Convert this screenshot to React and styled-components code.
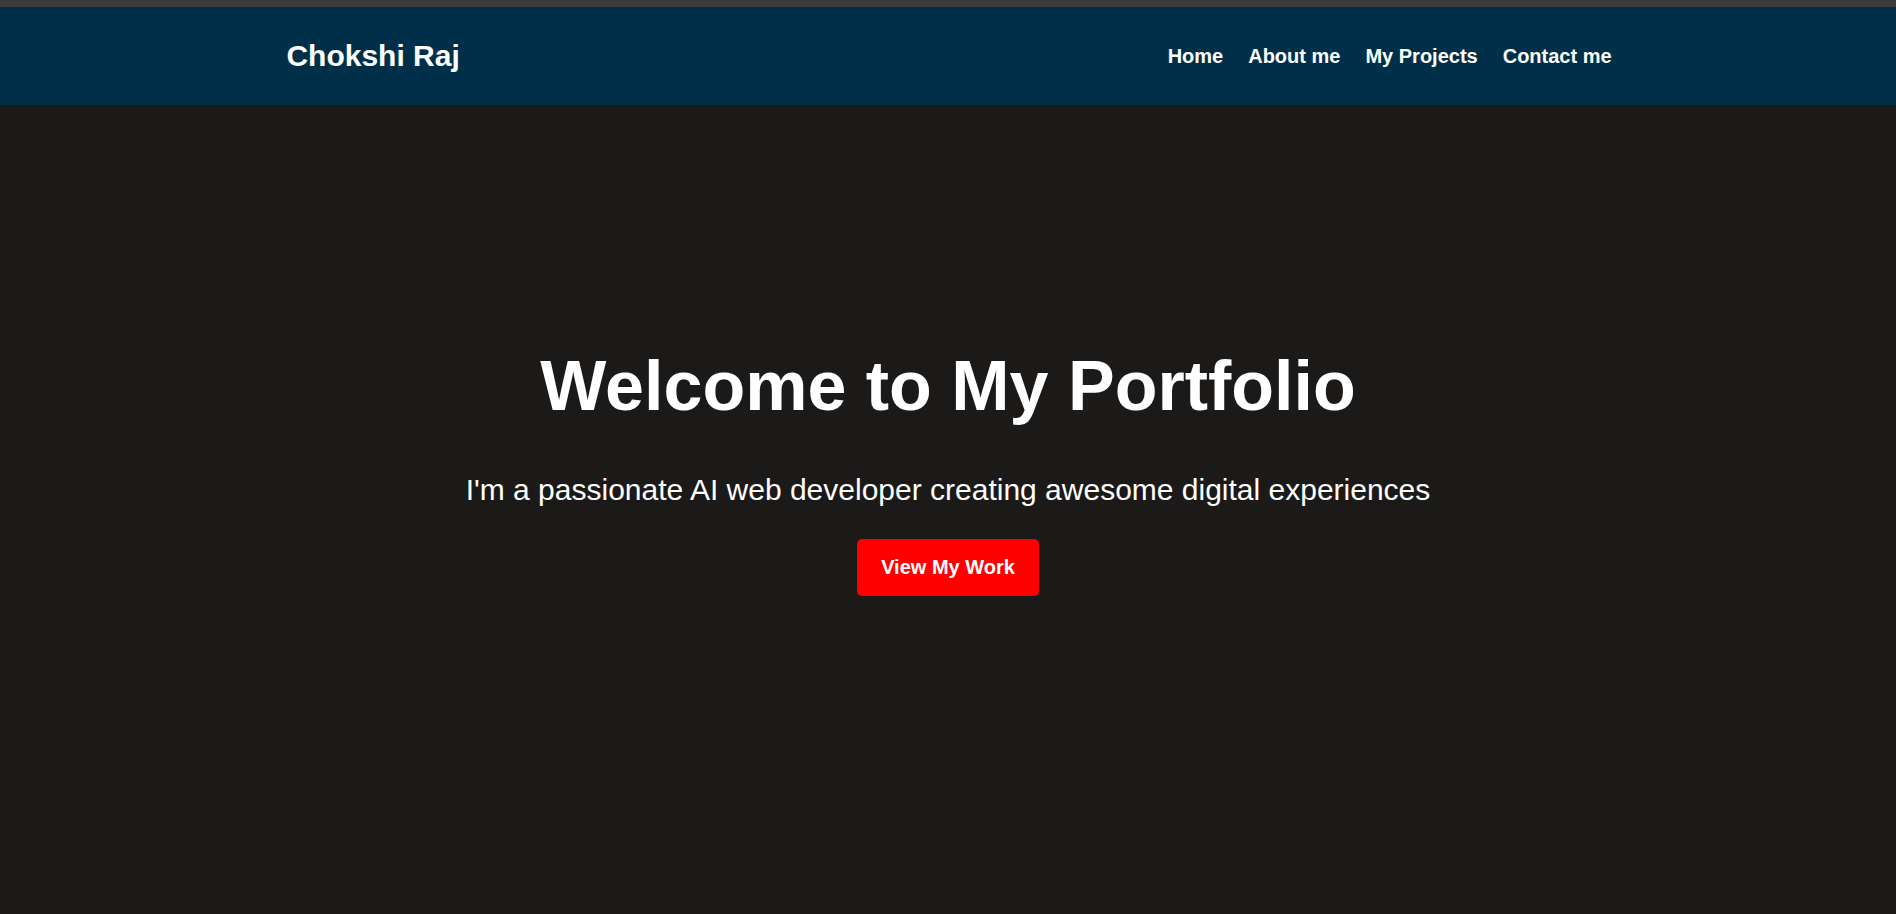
import React from "react";
import styled, { createGlobalStyle } from "styled-components";

const GlobalStyle = createGlobalStyle`
  html, body {
    margin: 0;
    padding: 0;
    background: #1c1a19;
    font-family: "Liberation Sans", Arial, sans-serif;
    color: #ffffff;
  }

  #root {
    min-height: 100vh;
  }
`;

const Page = styled.div`
  min-height: 100vh;
  display: flex;
  flex-direction: column;
  background: #1c1a19;
`;

const TopStrip = styled.div`
  height: 7px;
  background: #3c3c3c;
`;

const NavBar = styled.header`
  background: #003049;
  height: 98px;
  display: flex;
  justify-content: center;
`;

const NavInner = styled.nav`
  width: 70%;
  display: flex;
  align-items: center;
  justify-content: space-between;
`;

const Logo = styled.div`
  font-size: 30px;
  font-weight: 700;
  margin-left: 2px;
`;

const NavLinks = styled.ul`
  list-style: none;
  display: flex;
  gap: 25px;
  margin: 0;
  padding: 0;
`;

const NavLink = styled.a`
  color: #ffffff;
  text-decoration: none;
  font-size: 20px;
  font-weight: 700;
  cursor: pointer;
`;

const Hero = styled.section`
  display: flex;
  flex-direction: column;
  align-items: center;
  text-align: center;
  padding-top: 241px;
`;

const Title = styled.h1`
  font-size: 70px;
  font-weight: 700;
  margin: 0 0 47px;
`;

const Subtitle = styled.p`
  font-size: 30px;
  margin: 0 0 32px;
`;

const CtaButton = styled.button`
  background: #ff0000;
  color: #ffffff;
  border: none;
  border-radius: 5px;
  padding: 17px 24px;
  font-family: inherit;
  font-size: 20px;
  font-weight: 700;
  cursor: pointer;
`;

const links = ["Home", "About me", "My Projects", "Contact me"];

const App = () => {
  return (
    <Page>
      <GlobalStyle />
      <TopStrip />
      <NavBar>
        <NavInner>
          <Logo>Chokshi Raj</Logo>
          <NavLinks>
            {links.map(link => (
              <li key={link}>
                <NavLink>{link}</NavLink>
              </li>
            ))}
          </NavLinks>
        </NavInner>
      </NavBar>
      <Hero>
        <Title>Welcome to My Portfolio</Title>
        <Subtitle>I'm a passionate AI web developer creating awesome digital experiences</Subtitle>
        <CtaButton>View My Work</CtaButton>
      </Hero>
    </Page>
  );
};

export default App;
